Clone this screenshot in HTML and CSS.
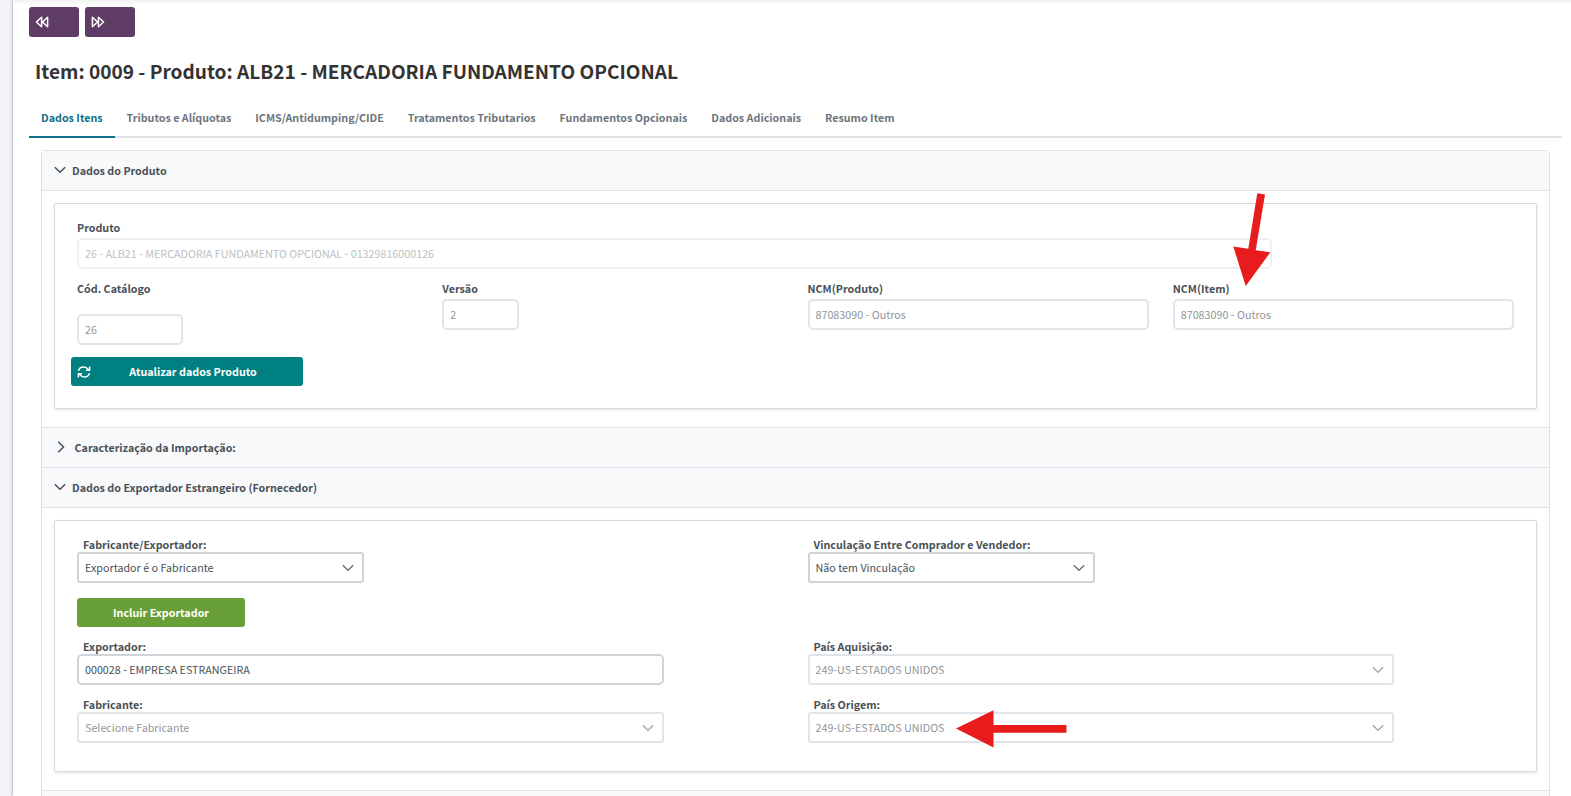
FILE: index.html
```html
<!DOCTYPE html>
<html lang="pt-BR">
<head>
<meta charset="utf-8">
<title>Item 0009</title>
<link rel="stylesheet" href="styles.css">
</head>
<body>
<svg class="defs" width="0" height="0">
  <symbol id="chev-down" viewBox="0 0 12 8"><path d="M.8 1.200 6 6.300l5.200-5.100" fill="none" stroke="currentColor" stroke-width="1.500"/></symbol>
  <symbol id="chev-right" viewBox="0 0 8 12"><path d="M1.200.8 6.500 6l-5.300 5.200" fill="none" stroke="currentColor" stroke-width="1.500"/></symbol>
  <symbol id="double-right" viewBox="0 0 14 12"><path d="M1.400 1.200v9.600L6.500 6zM7.400 1.200v9.600L12.600 6z" fill="none" stroke="currentColor" stroke-width="1.500" stroke-linejoin="round"/></symbol>
</svg>
<main class="page">
  <div class="toolbar">
    <button class="nav-btn"><svg class="nav-icon flip"><use href="#double-right"/></svg></button>
    <button class="nav-btn"><svg class="nav-icon"><use href="#double-right"/></svg></button>
  </div>
  <h1 class="title">Item: 0009 - Produto: ALB21 - MERCADORIA FUNDAMENTO OPCIONAL</h1>
  <nav class="tabs">
    <a class="tab active">Dados Itens</a>
    <a class="tab">Tributos e Alíquotas</a>
    <a class="tab">ICMS/Antidumping/CIDE</a>
    <a class="tab">Tratamentos Tributarios</a>
    <a class="tab">Fundamentos Opcionais</a>
    <a class="tab">Dados Adicionais</a>
    <a class="tab">Resumo Item</a>
  </nav>
  <div class="accordion">
    <div class="acc-head"><svg class="down"><use href="#chev-down"/></svg><span>Dados do Produto</span></div>
    <div class="acc-body">
      <section class="panel product">
        <div class="field produto"><label>Produto</label><div class="input faint">26 - ALB21 - MERCADORIA FUNDAMENTO OPCIONAL - 01329816000126</div></div>
        <div class="row four">
          <div class="field catalogo"><label>Cód. Catálogo</label><div class="input disabled">26</div></div>
          <div class="field versao"><label>Versão</label><div class="input disabled">2</div></div>
          <div class="field"><label>NCM(Produto)</label><div class="input disabled">87083090 - Outros</div></div>
          <div class="field"><label>NCM(Item)</label><div class="input disabled">87083090 - Outros</div></div>
        </div>
        <button class="btn teal">
          <svg class="refresh" viewBox="0 0 14 14"><path d="M1.600 5.800C2.100 3.300 4.300 2 6.700 2c2 0 3.500.9 4.700 2.600M12.600 1.500v3.700H8.900M12.400 8.200c-.5 2.500-2.700 3.800-5.100 3.800-2 0-3.500-.9-4.700-2.600M1.400 12.500V8.800h3.700" fill="none" stroke="currentColor" stroke-width="1.500"/></svg>
          <span>Atualizar dados Produto</span>
        </button>
      </section>
    </div>
    <div class="acc-head closed"><svg class="right"><use href="#chev-right"/></svg><span>Caracterização da Importação:</span></div>
    <div class="acc-head"><svg class="down"><use href="#chev-down"/></svg><span>Dados do Exportador Estrangeiro (Fornecedor)</span></div>
    <div class="acc-body">
      <section class="panel exporter">
        <div class="row two">
          <div class="field half"><label>Fabricante/Exportador:</label><div class="input select">Exportador é o Fabricante<svg class="down"><use href="#chev-down"/></svg></div></div>
          <div class="field half"><label>Vinculação Entre Comprador e Vendedor:</label><div class="input select">Não tem Vinculação<svg class="down"><use href="#chev-down"/></svg></div></div>
        </div>
        <button class="btn green">Incluir Exportador</button>
        <div class="row two">
          <div class="field"><label>Exportador:</label><div class="input">000028 - EMPRESA ESTRANGEIRA</div></div>
          <div class="field"><label>País Aquisição:</label><div class="input select disabled">249-US-ESTADOS UNIDOS<svg class="down"><use href="#chev-down"/></svg></div></div>
        </div>
        <div class="row two last">
          <div class="field"><label>Fabricante:</label><div class="input select disabled">Selecione Fabricante<svg class="down"><use href="#chev-down"/></svg></div></div>
          <div class="field"><label>País Origem:</label><div class="input select disabled">249-US-ESTADOS UNIDOS<svg class="down"><use href="#chev-down"/></svg></div></div>
        </div>
      </section>
    </div>
    <div class="acc-head"></div>
  </div>
</main>
<svg class="arrows" width="1571" height="796" viewBox="0 0 1571 796">
  <path d="M1257.300 193.300 1265 194.500 1255.700 250.300 1270.300 252.300 1245.700 286 1233.300 246.500 1248.300 248.700z" fill="#e81c1c"/>
  <path d="M956 728.500 993.500 710.300V725H1066.500v7.700H993.500V747.500z" fill="#e81c1c"/>
</svg>
</body>
</html>
```

FILE: styles.css
```css
* { box-sizing: border-box; }
html, body { height: 100%; }
body {
  margin: 0;
  padding-left: 13px;
  overflow: hidden;
  background: #f2f2f7;
  color: #495057;
  font: 10.740px/16px "Noto Sans CJK SC", "Noto Sans", sans-serif;
}
.defs { position: absolute; }
.page {
  height: 796px;
  padding: 7px 9px 0 16px;
  overflow: hidden;
  background: linear-gradient(#f1f1f1, #fff 5px);
  box-shadow: 0 0 3px rgba(0, 0, 0, .4);
}
.toolbar { display: flex; gap: 6px; }
button { border: 0; padding: 0; font: inherit; }
.nav-btn {
  display: flex;
  align-items: center;
  width: 50px;
  height: 30px;
  padding-left: 6px;
  border-radius: 3px;
  background: #5f3c66;
  color: #fff;
}
.nav-icon { width: 14px; height: 12px; }
.flip { transform: scaleX(-1); }
.title {
  margin: 19px 0 1px 6px;
  color: #333;
  font-size: 19.080px;
  font-weight: 700;
  line-height: 30px;
  white-space: nowrap;
}
.tabs {
  display: flex;
  height: 51px;
  border-bottom: 2px solid #dee2e6;
}
.tab {
  height: 51px;
  padding: 23px 11.900px 0 12px;
  border-bottom: 2px solid transparent;
  color: #6c757d;
  font-weight: 700;
  white-space: nowrap;
}
.tab.active { border-color: #116f8a; color: #116f8a; }
.accordion {
  margin: 12px 12px 0;
  border: 1px solid #dee2e6;
  border-radius: 4px 4px 0 0;
}
.acc-head {
  display: flex;
  align-items: center;
  gap: 6px;
  height: 40px;
  padding-left: 12px;
  border-bottom: 1px solid #dee2e6;
  background: #f8f9fa;
  font-weight: 700;
}
.acc-head .down { margin-top: -2px; }
.acc-head.closed { gap: 10px; padding-left: 14.500px; }
.down { width: 12px; height: 8px; flex: none; }
.right { width: 8px; height: 12px; flex: none; margin-top: -2px; }
.acc-body {
  padding: 12px 12px 18px;
  border-bottom: 1px solid #dee2e6;
}
.panel {
  padding: 16px 10px 0;
  border: 1px solid #d9dadc;
  border-radius: 2px;
  box-shadow: 0 1px 3px rgba(0, 0, 0, .12);
}
.product { height: 206px; }
.exporter { height: 252px; }
.row { display: grid; }
.four { grid-template-columns: repeat(4, 1fr); margin-top: 12px; }
.two { grid-template-columns: repeat(2, 1fr); }
.field { padding: 0 12px; }
label {
  display: block;
  margin-bottom: 2px;
  font-weight: 700;
}
.input {
  display: flex;
  align-items: center;
  height: 31px;
  padding: 0 7px 0 6px;
  border: 2px solid #ced4da;
  border-radius: 5px;
  background: #fff;
  white-space: nowrap;
}
.input.disabled { border-color: #e1e4e8; color: #929599; }
.input.faint { border-color: #eeeff3; color: #bdbfc2; }
.produto { width: 1219px; }
.catalogo label { margin-bottom: 17px; }
.catalogo .input { width: 106px; }
.versao .input { width: 77px; }
.btn {
  display: flex;
  align-items: center;
  justify-content: center;
  height: 29px;
  border-radius: 3px;
  color: #fff;
  font-weight: 700;
}
.teal { width: 232px; margin: 12px 0 0 6px; padding-left: 6px; background: #008080; }
.teal span { flex: 1; padding-right: 8px; }
.refresh { width: 14px; height: 14px; }
.green { width: 168px; margin: 15px 0 12px 12px; background: #689f38; }
.exporter label { margin: 0 0 -1px 6px; }
.exporter .field { padding-right: 132px; }
.exporter .half .input { width: 287px; }
.select { justify-content: space-between; padding-right: 8px; border-radius: 3px; }
.select svg { color: #6c757d; margin-top: 1px; }
.select.disabled svg { color: #a7abb0; }
.exporter .last { margin-top: 12px; }
.arrows { position: absolute; left: 0; top: 0; pointer-events: none; }
```
